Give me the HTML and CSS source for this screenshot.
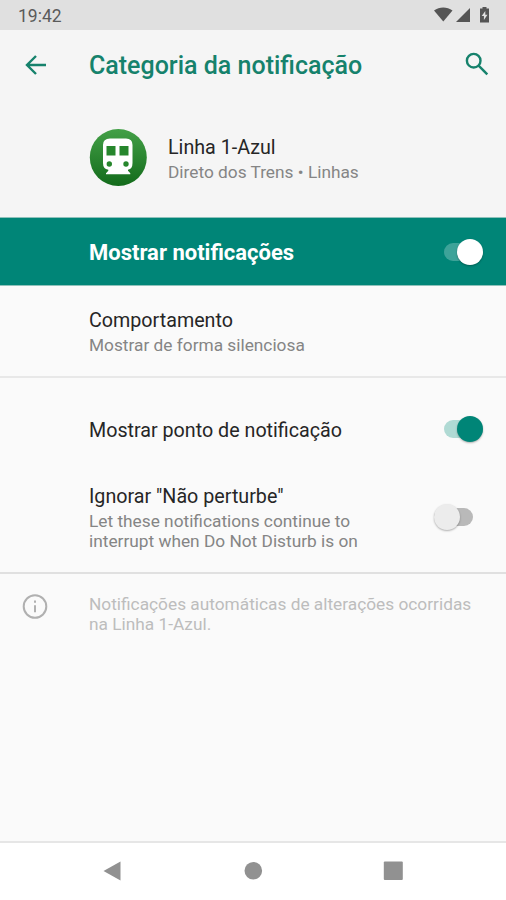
FILE: index.html
```html
<!DOCTYPE html>
<html lang="pt-BR">
<head>
    <meta charset="UTF-8">
    <meta name="viewport" content="width=device-width, initial-scale=1.0">
    <title>Categoria da notificação</title>
    <link rel="stylesheet" href="styles.css">
</head>
<body>
    <!-- Status bar -->
    <div class="status-bar">
        <span class="clock">19:42</span>
        <svg class="status-icons" width="58" height="18" viewBox="0 0 58 18">
            <path d="M0 4.500C5.500 .6 13 .6 18.500 4.500L9.300 15.500Z"/>
            <path d="M36 2v14H22z"/>
            <path fill-rule="evenodd" d="M48.500 2.500V1h4v1.500H55V16.500h-9V2.500zM51.300 5l-3.600 5h2.200v4l3.600-5.200h-2.200z"/>
        </svg>
    </div>

    <!-- Header -->
    <header class="header">
        <div class="toolbar">
            <svg class="back" width="24" height="22" viewBox="0 0 24 22">
                <path d="M22 11H3M12 2L3 11l9 9"/>
            </svg>
            <h1>Categoria da notificação</h1>
            <svg class="search" width="24" height="24" viewBox="0 0 24 24">
                <circle cx="8.700" cy="8.700" r="6.800"/>
                <path d="M13.600 13.600L22.300 22.300"/>
            </svg>
        </div>
        <div class="app">
            <svg class="app-icon" width="60" height="60" viewBox="0 0 60 60">
                <defs>
                    <linearGradient id="green" x1="0" y1="0" x2="0" y2="1">
                        <stop offset="0" stop-color="#43a047"/>
                        <stop offset="1" stop-color="#136b1b"/>
                    </linearGradient>
                </defs>
                <circle cx="30.300" cy="30.500" r="28.500" fill="url(#green)"/>
                <path fill="#fff" d="M22 11.500h16q6.500 0 6.500 6.500v18q0 6-4.500 6.800v1l2.300 2.500v1H18v-1l2.300-2.500v-1Q15 42 15 36V18q0-6.500 7-6.500z"/>
                <path fill="#26862c" d="M18.500 19h9v9.500h-9zM31.500 19h9v9.500h-9z"/>
                <circle cx="21.300" cy="37" r="2.700" fill="#26862c"/>
                <circle cx="38" cy="37" r="2.700" fill="#26862c"/>
            </svg>
            <div class="texts">
                <p class="name">Linha 1-Azul</p>
                <p class="summary">Direto dos Trens • Linhas</p>
            </div>
        </div>
    </header>

    <!-- Main switch -->
    <div class="main-switch">
        <p class="label">Mostrar notificações</p>
        <span class="switch on light"></span>
    </div>

    <!-- Settings -->
    <main class="settings">
        <div class="row behavior">
            <div class="texts">
                <p class="name">Comportamento</p>
                <p class="summary">Mostrar de forma silenciosa</p>
            </div>
        </div>
        <div class="row dot">
            <p class="name">Mostrar ponto de notificação</p>
            <span class="switch on"></span>
        </div>
        <div class="row ignore">
            <div class="texts">
                <p class="name">Ignorar "Não perturbe"</p>
                <p class="summary">Let these notifications continue to<br>interrupt when Do Not Disturb is on</p>
            </div>
            <span class="switch"></span>
        </div>
        <div class="footer">
            <svg class="info" width="26" height="26" viewBox="0 0 26 26">
                <circle cx="13" cy="12.500" r="11.300"/>
                <path d="M13 11.300v7M13 6.500v2.300"/>
            </svg>
            <p class="summary">Notificações automáticas de alterações ocorridas<br>na Linha 1-Azul.</p>
        </div>
    </main>

    <!-- Navigation bar -->
    <nav class="nav-bar">
        <svg width="20" height="20" viewBox="0 0 20 20"><path d="M.5 10L17.500 .5v19z"/></svg>
        <svg width="20" height="20" viewBox="0 0 20 20"><circle cx="10.300" cy="9.700" r="8.800"/></svg>
        <svg width="20" height="20" viewBox="0 0 20 20"><rect x=".8" y=".5" width="19" height="18.600" rx="1"/></svg>
    </nav>
</body>
</html>
```

FILE: styles.css
```css
* {
    box-sizing: border-box;
}

body {
    display: flex;
    flex-direction: column;
    height: 900px;
    margin: 0;
    background-color: #fafafa;
    font-family: Roboto, sans-serif;
    color: #262626;
}

p, h1 {
    margin: 0;
}

svg {
    display: block;
    flex: none;
}

/* Status bar */
.status-bar {
    display: flex;
    align-items: center;
    justify-content: space-between;
    height: 30px;
    padding: 0 14px 0 18px;
    background-color: #e0e0e0;
}

.clock {
    font-size: 17.5px;
    line-height: 20px;
    padding-top: 1px;
    color: #5a5a5a;
}

.status-icons {
    fill: #555;
}

/* Header */
.header {
    height: 187px;
    background-color: #f5f5f5;
}

.toolbar {
    display: flex;
    align-items: center;
    height: 70px;
    padding: 0 17px 0 24px;
}

.toolbar h1 {
    flex: 1;
    margin-left: 41px;
    padding-top: 2px;
    font-size: 25px;
    font-weight: 500;
    line-height: 30px;
    color: #16826c;
}

.back, .search {
    fill: none;
    stroke: #16826c;
    stroke-width: 2.4;
}

.back {
    margin-bottom: 1px;
}

.search {
    margin-bottom: 2px;
}

.app {
    display: flex;
    gap: 20px;
    padding: 27px 0 0 88px;
}

.app .texts {
    padding-top: 9px;
}

.name {
    font-size: 19.7px;
    line-height: 24px;
}

.summary {
    font-size: 17.3px;
    line-height: 20px;
    color: #858585;
}

.texts .summary {
    margin-top: 2px;
}

/* Main switch */
.main-switch {
    display: flex;
    align-items: center;
    justify-content: space-between;
    height: 69px;
    padding: 0 23px 0 89px;
    background-color: #008577;
    border-top: 1px solid #8fc2bb;
    border-bottom: 1px solid #8fc2bb;
}

.label {
    padding-top: 2px;
    font-size: 22px;
    font-weight: 700;
    color: #fff;
}

/* Switches */
.switch {
    display: flex;
    align-items: center;
    flex: none;
    width: 39px;
    height: 18px;
    background-color: #b9b9b9;
    border-radius: 9px;
}

.switch::before {
    content: "";
    flex: none;
    width: 26px;
    height: 26px;
    border-radius: 50%;
    background-color: #ececec;
    box-shadow: 0 1px 2px rgba(0, 0, 0, 0.3);
}

.switch.on {
    justify-content: flex-end;
    background-color: #b0dad4;
}

.switch.on::before {
    background-color: #008577;
}

.switch.light {
    background-color: #3da399;
}

.switch.light::before {
    background-color: #fff;
}

/* Settings */
.settings {
    flex: 1;
}

.row {
    display: flex;
    justify-content: space-between;
    padding-left: 89px;
}

.behavior {
    height: 92px;
    padding-top: 23px;
    border-bottom: 2px solid #e8e8e8;
}

.dot {
    align-items: center;
    height: 103px;
    padding-right: 23px;
}

.dot .name {
    padding-top: 3px;
}

.dot .switch {
    margin-bottom: 1px;
}

.ignore {
    height: 93px;
    padding-top: 4px;
    padding-right: 33px;
    border-bottom: 2px solid #e0e0e0;
}

.ignore .switch {
    margin-top: 23px;
}

/* Footer */
.footer {
    display: flex;
    gap: 41px;
    padding: 20px 0 0 22px;
}

.footer .summary {
    color: #bdbdbd;
}

.info {
    fill: none;
    stroke: #b0b0b0;
    stroke-width: 2;
}

/* Navigation bar */
.nav-bar {
    display: flex;
    justify-content: center;
    gap: 120px;
    height: 59px;
    padding-top: 18px;
    background-color: #fff;
    border-top: 2px solid #e6e6e6;
    fill: #919191;
}
```
